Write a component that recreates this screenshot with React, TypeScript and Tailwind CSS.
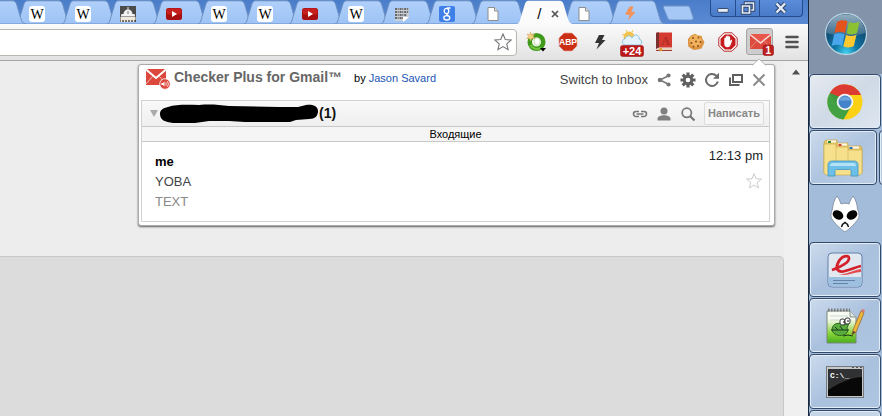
import type { ReactNode } from "react";
import clsx from "clsx";

type TabIcon = "none" | "wiki" | "dome" | "youtube" | "pixels" | "google" | "page" | "slash" | "bolt";

const tabs: { icon: TabIcon; title: string; active?: boolean }[] = [
  { icon: "wiki", title: "Wikipedia" },
  { icon: "wiki", title: "Wikipedia" },
  { icon: "dome", title: "Capitol" },
  { icon: "youtube", title: "YouTube" },
  { icon: "wiki", title: "Wikipedia" },
  { icon: "wiki", title: "Wikipedia" },
  { icon: "youtube", title: "YouTube" },
  { icon: "wiki", title: "Wikipedia" },
  { icon: "pixels", title: "Notes" },
  { icon: "google", title: "Google" },
  { icon: "page", title: "Page" },
  { icon: "slash", title: "Page", active: true },
  { icon: "page", title: "Page" },
  { icon: "bolt", title: "Page" },
];

function Favicon({ icon }: { icon: TabIcon }) {
  return (
    <svg viewBox="0 0 16 16" className="size-4 shrink-0" aria-hidden="true">
      {icon === "wiki" && (
        <>
          <rect width="16" height="16" rx="3" fill="#fff" />
          <text x="8" y="12.500" textAnchor="middle" fontFamily="Liberation Serif, serif" fontSize="14" fill="#000">
            W
          </text>
        </>
      )}
      {icon === "dome" && (
        <>
          <rect width="16" height="16" fill="#4b4b4b" />
          <path d="M7.500 1h1v2.500c2.500.5 3.800 2.200 4 4.500H3.500c.2-2.300 1.500-4 4-4.500z M1.500 8h13l.7 2.500H.8z" fill="#f3f3f3" />
          <path d="M8 5v3" stroke="#777" />
          <path d="M.5 11h15v3H.5z" fill="#efe8dc" />
          <path d="M1.500 14v2M4.500 14v2M7.500 14v2M10.500 14v2M13.500 14v2" stroke="#efe8dc" strokeWidth="1.500" />
        </>
      )}
      {icon === "youtube" && (
        <>
          <rect y="2" width="16" height="12" rx="2.500" fill="#a80f10" />
          <rect x="0.500" y="2.500" width="15" height="6" rx="2" fill="#c5201d" />
          <path d="M6 5l5 3-5 3z" fill="#fff" />
        </>
      )}
      {icon === "pixels" && (
        <>
          <path d="M1 2h14v9l-4 4H1z" fill="#c9ced4" />
          <path d="M1 3h14M1 6h14M1 9h12M1 12h9" stroke="#474747" strokeWidth="1.500" strokeDasharray="2 .7 1 .9" />
          <path d="M9 16v-5h6z" fill="#fff" />
        </>
      )}
      {icon === "google" && (
        <>
          <rect width="16" height="16" rx="2" fill="#3f7fe8" />
          <g fill="none" stroke="#fff" strokeWidth="1.300">
            <ellipse cx="7.500" cy="5" rx="2.300" ry="2.600" />
            <path d="M11.500 2H8M8.500 7.600c-2 .9.300 1.700 1.200 2.400" />
            <ellipse cx="7.800" cy="11.800" rx="3" ry="2.200" />
          </g>
        </>
      )}
      {icon === "page" && (
        <>
          <path d="M3 1.500h6.500L13 5v9.500H3z" fill="#fdfdfd" stroke="#8e8e8e" />
          <path d="M9.500 1.500V5H13" fill="#e6e6e6" stroke="#8e8e8e" />
        </>
      )}
      {icon === "bolt" && <path d="M7.500 0.500h4L9.500 5.500l4 .5L6 14.500 7.500 9 3 8.500z" fill="#f2935c" />}
    </svg>
  );
}

function BrowserTab({ icon, title, active }: { icon: TabIcon; title: string; active?: boolean }) {
  return (
    <button type="button" role="tab" aria-selected={!!active} aria-label={title} className={clsx("relative h-6 min-w-0 flex-1", active && "z-20")}>
      <svg viewBox="0 0 56 24" preserveAspectRatio="none" className="absolute -left-1 top-0 h-6 w-14" aria-hidden="true">
        <path
          d="M0 24c3-1 3-4 4.500-9l3-9.500C8.500 2 9.500.8 12 .8H42c3 0 4 1.200 5 4.700l3.500 12C52 22 53 23.500 56 24z"
          fill={active ? "#fbfbfb" : "url(#tabFill)"}
          stroke={active ? "none" : "#6d8fc2"}
        />
      </svg>
      {active ? (
        <span className="relative flex h-6 items-center justify-between pt-1 pr-2 pl-4 font-['Liberation_Sans',sans-serif] text-[15px] text-black">
          /
          <svg viewBox="0 0 8 8" className="size-2" aria-hidden="true">
            <path d="M1 1l6 6M7 1L1 7" stroke="#555" strokeWidth="1.700" />
          </svg>
        </span>
      ) : (
        <span className="relative flex pt-1 pl-[9px]">
          <Favicon icon={icon} />
        </span>
      )}
    </button>
  );
}

function TabStrip() {
  return (
    <div className="flex h-6 bg-linear-to-b from-[#4a7dc9] to-[#5b8ad2]">
      <svg className="absolute size-0" aria-hidden="true">
        <defs>
          <linearGradient id="tabFill" x2="0" y2="1">
            <stop offset="0" stopColor="#b0d0fa" />
            <stop offset="1" stopColor="#9dc3f5" />
          </linearGradient>
        </defs>
      </svg>
      <div className="relative h-6 w-5 shrink-0">
        <svg viewBox="0 0 27 24" className="absolute top-0 left-0 z-10 h-6 w-[27px]" aria-hidden="true">
          <path d="M-2 .8H12c3 0 4 1.200 5 4.700l3.500 12C22 22 23 23.500 26 24H-2z" fill="url(#tabFill)" stroke="#6d8fc2" />
        </svg>
      </div>
      <div role="tablist" className="flex w-[638px] flex-row">
        {tabs.map((tab, i) => (
          <BrowserTab key={i} {...tab} />
        ))}
      </div>
      <button type="button" aria-label="New tab" className="ml-1 h-6">
        <svg viewBox="0 0 32 24" className="h-6 w-8">
          <path d="M3 6h22c2 0 2.500.500 3 2l3 9c.5 2 0 3-2 3H9c-2 0-2.800-.6-3.500-2.500L1.500 8C1 6.500 1.500 6 3 6z" fill="#a5c8f6" stroke="#6d93c9" />
        </svg>
      </button>
      <div className="mr-[5px] ml-auto flex h-[17px] overflow-hidden rounded-b-sm border border-t-0 border-[#244b8c] bg-linear-to-b from-[#5b8cda] to-[#4a7bc8]">
        <button type="button" aria-label="Minimize" className="w-[25px] border-r border-[#244b8c]">
          <svg viewBox="0 0 25 16" className="h-4 w-6">
            <rect x="7" y="8.500" width="11" height="4" rx="1" fill="#e4edf8" stroke="#32456a" />
          </svg>
        </button>
        <button type="button" aria-label="Restore" className="w-6 border-r border-[#244b8c]">
          <svg viewBox="0 0 24 16" className="h-4 w-6" fill="none">
            <path d="M9.500 3h8v7h-8z" stroke="#32456a" strokeWidth="3.500" />
            <path d="M9.500 3h8v7h-8z" stroke="#e4edf8" strokeWidth="1.500" />
            <path d="M6.500 6h7v7h-7z" fill="#5685d2" stroke="#32456a" strokeWidth="3.500" />
            <path d="M6.500 6h7v7h-7z" stroke="#e4edf8" strokeWidth="1.700" />
          </svg>
        </button>
        <button type="button" aria-label="Close" className="flex w-[42px] justify-center">
          <svg viewBox="0 0 20 16" className="h-4 w-5">
            <path d="M5.500 3.500l8.500 9M14 3.500l-8.500 9" stroke="#32456a" strokeWidth="4.500" />
            <path d="M5.500 3.500l8.500 9M14 3.500l-8.500 9" stroke="#e4edf8" strokeWidth="2.400" />
          </svg>
        </button>
      </div>
    </div>
  );
}

function ExtensionButton({ label, children }: { label: string; children: ReactNode }) {
  return (
    <button type="button" aria-label={label} className="flex h-9 w-8 shrink-0 items-center justify-center">
      {children}
    </button>
  );
}

function Toolbar() {
  return (
    <div className="flex h-[37px] items-center border-b border-[#a5a5a5] bg-linear-to-b from-[#fbfbfb] to-[#e2e2e2]">
      <div className="mr-[3px] -ml-1 flex h-[27px] min-w-0 flex-1 items-center rounded-sm border border-[#b8b6ae] bg-white pr-1">
        <input aria-label="Address" className="min-w-0 flex-1 bg-transparent px-2 text-sm outline-none" />
        <button type="button" aria-label="Bookmark this page">
          <svg viewBox="0 0 18 18" className="size-[18px]">
            <path d="M9 1l2.300 5.500 5.900.5-4.500 3.900 1.400 5.800L9 13.600l-5.100 3.100 1.400-5.800L.8 7l5.900-.5z" fill="#fff" stroke="#777" strokeWidth="1.100" />
          </svg>
        </button>
      </div>

      <ExtensionButton label="Downloader">
        <svg viewBox="0 0 20 20" className="size-5">
          <circle cx="10.500" cy="10" r="6.800" fill="#f3f7ec" stroke="#3f9a1c" strokeWidth="4.500" />
          <path d="M4.500 13a7 7 0 0 0 10.500 2.500" stroke="#76c442" strokeWidth="2" fill="none" />
          <ellipse cx="11" cy="9.500" rx="3" ry="3.800" fill="#fff" stroke="#a9d68c" strokeWidth=".7" />
          <path d="M4.500 0l1 2.800L8.500 2 7 4.500l2 2-3-.2L4.500 9 3.600 6.300.5 6.500 2.700 4.500 1 2l2.800.7z" fill="#f1cf83" stroke="#d6a552" strokeWidth=".5" />
          <path d="M14 16h6l-3 3.500z" fill="#000" />
        </svg>
      </ExtensionButton>
      <ExtensionButton label="Adblock Plus">
        <svg viewBox="0 0 20 20" className="size-5">
          <path d="M6 1h8l5 5v8l-5 5H6l-5-5V6z" fill="#cb2f16" stroke="#e8a497" strokeWidth=".7" />
          <text x="10" y="13.200" textAnchor="middle" fontFamily="Liberation Sans, sans-serif" fontWeight="bold" fontSize="8.500" fill="#fff">
            ABP
          </text>
        </svg>
      </ExtensionButton>
      <ExtensionButton label="Bolt">
        <svg viewBox="0 0 16 16" className="size-4">
          <path d="M7 1h5.500L10 6h3.500L4.500 15.500 7 9H3z" fill="#333" />
        </svg>
      </ExtensionButton>
      <ExtensionButton label="Weather +24">
        <svg viewBox="0 0 24 30" className="h-[30px] w-6">
          <circle cx="9" cy="10" r="5.500" fill="#f5c34c" />
          <path d="M2 7l2 1M6 3l1 2M13 3l-1 2" stroke="#f5c34c" />
          <path d="M5 18c-4-1-3-6 0-6 1-4 6-4 7-1 2-5 8-3 7 1 3 0 4 6 0 6z" fill="#e4f2fb" stroke="#7bb8da" strokeWidth=".8" />
          <rect x="0.500" y="18.500" width="23" height="11" rx="2" fill="#bd1717" stroke="#8e0e0e" strokeWidth=".5" />
          <text x="12" y="27.500" textAnchor="middle" fontFamily="Liberation Sans, sans-serif" fontWeight="bold" fontSize="11" fill="#fff">
            +24
          </text>
        </svg>
      </ExtensionButton>
      <ExtensionButton label="Dictionary">
        <svg viewBox="0 0 18 20" className="h-5 w-[18px]">
          <path d="M1 2c0-1 .5-1.500 1.500-1.500H17v15H2.500L1 17z" fill="#d53a31" />
          <path d="M1 2c0-1 .5-1.500 1.500-1.500H4v15L1 17z" fill="#7a3130" />
          <path d="M1.500 18.500c0-2 .5-2.500 2-2.500H17v2.500z" fill="#e6d3bd" />
          <path d="M1 18.500h16" stroke="#a53a33" />
          <path d="M4.500 16H7v3.500l-1.300-1-1.200 1z" fill="#e1a32c" />
          <text x="10.500" y="12.500" textAnchor="middle" fontFamily="Liberation Serif, serif" fontWeight="bold" fontSize="12" fill="#b02a26">
            A
          </text>
        </svg>
      </ExtensionButton>
      <ExtensionButton label="Cookies">
        <svg viewBox="0 0 18 18" className="size-[18px]">
          <path d="M4 2.500L8 .8l3 1.700 3.500.2 1 3.300 2 3-1.500 3.500-1.500 3-4 1L7 17l-3-1.500-2.700-2L1 9.500 1 6z" fill="#dd9440" />
          <circle cx="8.500" cy="8" r="6" fill="#f0b25c" />
          <g fill="#8d4d1c">
            <circle cx="6" cy="5" r="1" />
            <circle cx="11.500" cy="4.500" r=".9" />
            <circle cx="9" cy="8.500" r="1" />
            <circle cx="4.500" cy="10" r="1" />
            <circle cx="13.500" cy="9" r="1" />
            <circle cx="11" cy="13" r="1" />
            <circle cx="6.500" cy="13.500" r=".9" />
          </g>
        </svg>
      </ExtensionButton>
      <ExtensionButton label="AdBlock">
        <svg viewBox="0 0 20 20" className="size-5">
          <path d="M6 .8h8L19.200 6v8L14 19.200H6L.8 14V6z" fill="#fff" stroke="#b8262a" />
          <path d="M6.800 2.500h6.400l4.300 4.300v6.400l-4.300 4.300H6.800l-4.300-4.300V6.800z" fill="#c61e20" />
          <path d="M6.300 9V6.500c0-1 1.300-1 1.300 0V5c0-1.200 1.500-1.200 1.500 0v-.6c0-1.100 1.500-1.100 1.500 0V5c0-1 1.500-1 1.500 0v4l.7-.9c.8-.8 1.700 0 1.200 1L12.500 13c-.6 1.500-1.500 2.200-3 2.200-2.200 0-3.200-1.300-3.200-3.400z" fill="#fff" />
        </svg>
      </ExtensionButton>
      <ExtensionButton label="Checker Plus for Gmail, 1 unread">
        <svg viewBox="0 0 28 28" className="size-7">
          <rect x="0.500" y="0.500" width="26" height="26" rx="2.500" fill="#cdcdcd" stroke="#a6a6a6" />
          <path d="M4 6h21v15H4z" fill="#dd4b3e" />
          <path d="M4 6h21l-10.500 9z" fill="#e9564a" />
          <path d="M4 6.500l10.500 8.500L25 6.500" fill="none" stroke="#f7dedb" strokeWidth="1.500" />
          <path d="M4 20.500l7-8M25 20.500l-7-8" fill="none" stroke="#eb8f86" strokeWidth=".8" />
          <rect x="17" y="17" width="10.500" height="10.500" rx="2" fill="#bd2020" stroke="#9a1515" strokeWidth=".6" />
          <text x="22.300" y="26" textAnchor="middle" fontFamily="Liberation Sans, sans-serif" fontWeight="bold" fontSize="10" fill="#fff">
            1
          </text>
        </svg>
      </ExtensionButton>
      <ExtensionButton label="Menu">
        <svg viewBox="0 0 14 14" className="size-3.5">
          <path d="M1.500 2h11M1.500 7h11M1.500 12h11" stroke="#525252" strokeWidth="2.600" strokeLinecap="round" />
        </svg>
      </ExtensionButton>
    </div>
  );
}

function PopupHeader() {
  return (
    <div className="flex h-[35px] items-start pr-2 pl-1.5 text-[#555]">
      <svg viewBox="0 0 26 22" className="mt-[3px] h-[22px] w-[26px] shrink-0" aria-hidden="true">
        <path d="M1 1h20v16H1z" fill="#dc483b" />
        <path d="M1 1.500l10 8.500 10-8.500" fill="none" stroke="#fff" strokeWidth="2" />
        <path d="M1 16l7-8M21 16l-7-8" fill="none" stroke="#f3b5af" />
        <circle cx="20" cy="16" r="5.300" fill="#dc483b" stroke="#fff" strokeWidth=".8" />
        <path d="M16.500 15h1.500l1.500-1.500v5L18 17h-1.500z" fill="#fff" />
        <path d="M20.800 14.200q1 1.800 0 3.600M22.500 13.200q1.800 2.800 0 5.600" stroke="#fff" fill="none" strokeWidth=".8" />
      </svg>
      <h1 className="ml-[3px] pt-[3px] text-[14px] leading-[18px] font-bold text-[#666]">Checker Plus for Gmail™</h1>
      <p className="ml-3 pt-[5px] text-[11px] leading-4 text-black">
        by{" "}
        <a href="#author" className="text-[#1b55b5]">
          Jason Savard
        </a>
      </p>
      <div className="ml-auto flex items-center gap-2 pt-[3px]">
        <a href="#inbox" className="text-[13px] leading-6 text-[#444]">
          Switch to Inbox
        </a>
        <button type="button" aria-label="Share">
          <svg viewBox="0 0 16 16" className="size-4">
            <path d="M13 3.500L4 8l9 4.500" stroke="#777" strokeWidth="1.500" fill="none" />
            <g fill="#777">
              <circle cx="12.500" cy="3.500" r="2.100" />
              <circle cx="4" cy="8" r="2.300" />
              <circle cx="12.500" cy="12.500" r="2.100" />
            </g>
          </svg>
        </button>
        <button type="button" aria-label="Options">
          <svg viewBox="0 0 16 16" className="size-4">
            <g stroke="#606060" strokeWidth="3.200">
              <path d="M8 .5v15M.5 8h15M2.700 2.700l10.600 10.600M13.300 2.700L2.700 13.300" />
            </g>
            <circle cx="8" cy="8" r="5.200" fill="#606060" />
            <circle cx="8" cy="8" r="2.300" fill="#fff" />
          </svg>
        </button>
        <button type="button" aria-label="Refresh">
          <svg viewBox="0 0 16 16" className="size-4">
            <path d="M13.800 9.500A6 6 0 1 1 12.300 3.800" fill="none" stroke="#6a6a6a" strokeWidth="2" />
            <path d="M15 .8v6H9z" fill="#6a6a6a" />
          </svg>
        </button>
        <button type="button" aria-label="Pop out">
          <svg viewBox="0 0 16 16" className="size-4" fill="none" stroke="#5f5f5f" strokeWidth="2">
            <path d="M5 3h9v7H5z" />
            <path d="M2 5.500V13h9.500" />
          </svg>
        </button>
        <button type="button" aria-label="Close popup">
          <svg viewBox="0 0 14 14" className="size-3.5">
            <path d="M1.500 1.500l11 11M12.500 1.500l-11 11" stroke="#8b8b8b" strokeWidth="2" />
          </svg>
        </button>
      </div>
    </div>
  );
}

function GmailPopup() {
  return (
    <section aria-label="Checker Plus for Gmail" className="absolute top-[3px] right-[33px] z-30 w-[637px] rounded-[3px] border border-[#aaa] bg-white pr-1 pb-[3px] pl-0.5 font-['Liberation_Sans',Arial,sans-serif] shadow-[0_1px_2px_rgba(0,0,0,0.6)]">
      <svg viewBox="0 0 14 8" className="absolute -top-[7px] right-2 h-2 w-3.5" aria-hidden="true">
        <path d="M0 8L7 1l7 7z" fill="#fff" />
        <path d="M0 7.500L7 1l7 6.500" fill="none" stroke="#bbb" />
      </svg>
      <div className="-mr-1 -ml-0.5">
        <PopupHeader />
      </div>
      <div className="border border-[#d2d2d2]">
        <div className="flex h-[26px] items-center border-b border-[#c9c9c9] bg-linear-to-b from-[#f9f9f9] to-[#efefef] pr-[5px] pl-[7px]">
          <svg viewBox="0 0 10 10" className="size-2.5" aria-hidden="true">
            <path d="M1 1h8L5 8z" fill="#aaa" />
          </svg>
          {/* scribbled-out account name */}
          <svg viewBox="0 0 160 20" className="h-5 w-40 shrink-0" aria-hidden="true">
            <path d="M9 3C18 0 30 1 40 1c12-1 20 0 30 1l50 1h19l8-2c8-1 12 2 12 6 0 5-3 8-9 8l-13 1-6 2H86l-16-1H50l-14 2H14C6 18 1 16 1 10c0-4 3-6 8-7z" fill="#000" />
          </svg>
          <span className="text-[14px] font-bold text-[#111]">(1)</span>
          <div className="ml-auto flex items-center gap-2">
            <button type="button" aria-label="Open link">
              <svg viewBox="0 0 16 16" className="size-4" fill="none" stroke="#777" strokeWidth="1.600">
                <path d="M7 5.500H4a2.500 2.500 0 0 0 0 5h3M9 5.500h3a2.500 2.500 0 0 1 0 5H9M4.500 8h7" />
              </svg>
            </button>
            <button type="button" aria-label="Contacts">
              <svg viewBox="0 0 16 16" className="size-4" fill="#808080">
                <circle cx="8" cy="5" r="3.500" />
                <path d="M1.500 14.500v-1.500c0-2.500 3-3.700 6.500-3.700s6.500 1.200 6.500 3.700v1.500z" />
              </svg>
            </button>
            <button type="button" aria-label="Search">
              <svg viewBox="0 0 16 16" className="size-4" fill="none" stroke="#777">
                <circle cx="6.800" cy="6.800" r="4.600" strokeWidth="1.700" />
                <path d="M10 10l4.500 4.500" strokeWidth="2.200" />
              </svg>
            </button>
            <button type="button" className="h-[23px] w-[60px] rounded-xs border border-[#dcdcdc] bg-[#f6f6f6] text-[11px] font-bold text-[#888]">
              Написать
            </button>
          </div>
        </div>
        <h2 className="h-[15px] border-b border-[#c9c9c9] bg-[#f5f5f5] text-center text-[11px] leading-[14px] text-black">Входящие</h2>
        <article className="flex h-[79px] justify-between pr-1.5 pl-[13px]">
          <div className="pt-[10px] text-[13px] leading-5">
            <p className="font-bold text-black">me</p>
            <p className="text-[#444]">YOBA</p>
            <p className="text-[#888]">TEXT</p>
          </div>
          <div className="flex flex-col items-end pt-1">
            <time className="text-[13px] leading-5 text-[#222]">12:13 pm</time>
            <button type="button" aria-label="Star message" className="mt-1.5">
              <svg viewBox="0 0 18 18" className="size-[18px]">
                <path d="M9 1.500l2 5.300 5.500.2-4.300 3.500 1.500 5.500L9 13l-4.700 3 1.500-5.500L1.500 7 7 6.800z" fill="#fff" stroke="#ccc" />
              </svg>
            </button>
          </div>
        </article>
      </div>
    </section>
  );
}

function StartOrb() {
  return (
    <svg viewBox="0 0 44 44" className="size-11" aria-hidden="true">
      <defs>
        <radialGradient id="orb" cx="0.5" cy="0.95" r="0.8">
          <stop offset="0" stopColor="#3fd0ee" />
          <stop offset="0.350" stopColor="#1178a6" />
          <stop offset="1" stopColor="#0f3a60" />
        </radialGradient>
        <linearGradient id="orbShine" x2="0" y2="1">
          <stop offset="0" stopColor="#b3cad8" />
          <stop offset="1" stopColor="#42718f" />
        </linearGradient>
      </defs>
      <circle cx="22" cy="22" r="20.500" fill="url(#orb)" stroke="#b7d2e2" strokeWidth="1.300" />
      <path d="M2.500 21C4 8 12 2.500 22 2.500S40 8 41.500 21c-12 4-27 4-39 0z" fill="url(#orbShine)" opacity=".8" />
      <path d="M13 10c3-2 6.500-2.500 10.500-.7L21 21c-3-1.800-6.500-1.800-10.500 0z" fill="#e4531c" />
      <path d="M25 10c3 1.500 7 1.500 10.500-.3L33 21c-3 1.800-7 2-10.500.3z" fill="#8cc232" />
      <path d="M10 22.500c3.500-1.800 7-1.500 10.600 0L18 34c-3-1.800-6.500-1.800-10.300 0z" fill="#4aa6ec" />
      <path d="M22 23c3 1.500 7 1.500 10.500-.3L29.800 34c-3 1.800-7 2-10.500.3z" fill="#fdc92f" />
    </svg>
  );
}

function ChromeIcon() {
  return (
    <svg viewBox="0 0 36 36" className="size-9" aria-hidden="true">
      <circle cx="18" cy="18" r="17.500" fill="#fbd116" />
      <path d="M18 18L2.500 9.500A17.500 17.500 0 0 0 16.500 35.500l7.500-13z" fill="#42a243" />
      <path d="M2.800 9A17.500 17.500 0 0 1 34 11H18l-7.500 9z" fill="#db3b30" />
      <path d="M3 9l7 12 3-8z" fill="#3b9a3f" />
      <circle cx="18" cy="18" r="8.300" fill="#f4f4f4" />
      <circle cx="18" cy="18" r="6.500" fill="#4383c9" />
      <path d="M12 16.500a6.500 6.500 0 0 1 12 0z" fill="#6ea4dc" />
    </svg>
  );
}

function ExplorerIcon() {
  return (
    <svg viewBox="0 0 40 40" className="size-10" aria-hidden="true">
      <path d="M1 4l2-2h11v3h11v3h13l1 2v25H1z" fill="#e3c566" stroke="#c6a448" strokeWidth=".7" />
      <path d="M4 3.500h9M15 6.500h9M26 9.500h10" stroke="#fdfbf0" strokeWidth="2" />
      <path d="M5 4h3" stroke="#2f8a37" strokeWidth="2" />
      <path d="M15.500 7h3" stroke="#cc4434" strokeWidth="2" />
      <path d="M26.500 10h3" stroke="#2f6fb7" strokeWidth="2" />
      <path d="M1 6h12v3h12v3h14v23l-2 2H3l-2-2z" fill="#f6e08c" stroke="#cfae4c" strokeWidth=".7" />
      <path d="M13 9v16M25 12v13" stroke="#e0c468" />
      <path d="M5 38V27c0-2.500 1.500-4 4-4h22c2.500 0 4 1.500 4 4v11h-7v-5c0-1-.5-1.500-1.500-1.500h-13c-1 0-1.500.5-1.500 1.500v5z" fill="#6bbfe8" stroke="#4795bd" strokeWidth=".8" />
      <path d="M7 28c0-2 1-3 3-3h20c2 0 3 1 3 3z" fill="#b4e2f5" />
    </svg>
  );
}

function FoobarIcon() {
  return (
    <svg viewBox="0 0 32 38" className="h-[38px] w-8" aria-hidden="true">
      <path d="M8 1c2 3 3 5 4 8 3-1 5-1 8 0 1-3 2-5 4-8 3 4 4 8 4.500 13 2 5 2 8 0 11-3 4-8 9-12.500 12C11.500 34 6.500 29 3.500 25c-2-3-2-6 0-11C4 9 5 5 8 1z" fill="#fff" stroke="#788899" strokeWidth=".8" />
      <ellipse cx="9" cy="20" rx="5.700" ry="4.300" transform="rotate(30 9 20)" fill="#050505" />
      <ellipse cx="23" cy="20" rx="5.700" ry="4.300" transform="rotate(-30 23 20)" fill="#050505" />
      <path d="M12.500 32l1-2.500 2.500-2 2.500 2 1 2.500" fill="none" stroke="#111" strokeWidth="1.500" />
    </svg>
  );
}

function ReaderIcon() {
  return (
    <svg viewBox="0 0 36 36" className="size-9" aria-hidden="true">
      <rect x="1" y="1" width="34" height="34" rx="4" fill="#e2e8f0" stroke="#6281aa" />
      <path d="M1.500 25h33v6c0 2.500-1.500 3.500-3.500 3.500H5c-2 0-3.500-1-3.500-3.500z" fill="#9dbfe0" />
      <path d="M6 28.500h22M6 31.500h15" stroke="#6382a8" />
      <path d="M5 18C13 15 22 11 22 6.500 22 2 14 4 11 11c-3 6 0 10 7 8 6-1.500 11-4 16-5" fill="none" stroke="#d32029" strokeWidth="2.800" />
      <path d="M12 22c7 1 14-4 22-5v3c-8 0-14 5-22 2z" fill="#e34f50" />
    </svg>
  );
}

function NotepadIcon() {
  return (
    <svg viewBox="0 0 40 38" className="h-[38px] w-10" aria-hidden="true">
      <defs>
        <linearGradient id="sheet" x2="0" y2="1">
          <stop offset="0.250" stopColor="#f8fbf2" />
          <stop offset="0.700" stopColor="#88d437" />
          <stop offset="1" stopColor="#48ae1d" />
        </linearGradient>
      </defs>
      <path d="M2 4h23l6 6v26H2z" fill="url(#sheet)" stroke="#7b877d" />
      <path d="M25 4v6h6" fill="#dce1df" stroke="#88938b" />
      <path d="M3 3h22" stroke="#777" strokeWidth="3" strokeDasharray="1.500 1.500" />
      <path d="M5 9h18M5 13h22" stroke="#cbd8ce" />
      <path d="M7 22c1-6 7-7 12-4l5-2-2 5c3 5-4 9-10 7-3-1-5-3-5-6z" fill="#58ad3c" stroke="#1e4e1b" strokeWidth=".8" />
      <path d="M6 23h18M10 20l3 3M15 19l3 4M18 29l5-1 5 1" fill="none" stroke="#18391a" />
      <rect x="15" y="12" width="5" height="6" rx="2" fill="#fff" stroke="#333" />
      <rect x="20" y="11" width="5" height="6" rx="2" fill="#fff" stroke="#333" />
      <path d="M19 14v2M23 13v2" stroke="#111" />
      <path d="M27 28l1-5L36 4l3 2-8 19z" fill="#f0b83b" stroke="#9a6a2a" strokeWidth=".8" />
      <path d="M36 4l1-2 3 1-1 3z" fill="#d77b76" />
      <path d="M27 28l1-4 2.500 1z" fill="#514033" />
    </svg>
  );
}

function ConsoleIcon() {
  return (
    <svg viewBox="0 0 38 32" className="h-8 w-[38px]" aria-hidden="true">
      <rect x="0.500" y="0.500" width="37" height="31" fill="#c6c8ca" stroke="#73797f" />
      <path d="M2 3h34v27H2z" fill="#080808" />
      <path d="M2 3h34v8C22 12 12 18 2 24z" fill="#2f3133" />
      <path d="M26 1.500h2M30 1.500h2M34 1.500h2" stroke="#555" />
      <text x="4" y="12" fontFamily="Liberation Mono, monospace" fontWeight="bold" fontSize="8" fill="#fff">
        C:\_
      </text>
    </svg>
  );
}

function TaskButton({ label, className, children }: { label: string; className?: string; children?: ReactNode }) {
  return (
    <button
      type="button"
      aria-label={label}
      className={clsx("flex h-[53px] shrink-0 items-center justify-center rounded-[3px] border border-[#e3edf7] outline outline-[#344a68]", className)}
    >
      {children}
    </button>
  );
}

function Taskbar() {
  return (
    <aside aria-label="Taskbar" className="flex w-[74px] shrink-0 flex-col overflow-hidden border-l border-[#17273f] bg-[#a3bcda]">
      <button type="button" aria-label="Start" className="flex h-[74px] shrink-0 items-center justify-center bg-[#8293aa] pb-1.5">
        <StartOrb />
      </button>
      <div className="flex flex-col gap-[3px] pt-px pr-0.5 pl-px">
        <TaskButton label="Chrome" className="bg-linear-to-br from-[#e6eaf0] via-[#cfdae6] to-[#dde6f0]">
          <ChromeIcon />
        </TaskButton>
        <div className="flex gap-1">
          <TaskButton label="Explorer" className="flex-1 bg-linear-to-br from-[#cbdaec] via-[#aec4df] to-[#b9cde5]">
            <ExplorerIcon />
          </TaskButton>
          <span className="-mr-1 w-1 rounded-l-[3px] border-l border-[#e3edf7] bg-[#b3c8e1] outline outline-[#344a68]" />
        </div>
        <button type="button" aria-label="foobar2000" className="flex h-[53px] items-center justify-center">
          <FoobarIcon />
        </button>
        <TaskButton label="Reader" className="bg-linear-to-br from-[#cbdaec] via-[#aac1de] to-[#afc6e2]">
          <ReaderIcon />
        </TaskButton>
        <TaskButton label="Notepad++" className="bg-linear-to-br from-[#cbdaec] via-[#aac1de] to-[#afc6e2]">
          <NotepadIcon />
        </TaskButton>
        <TaskButton label="Command prompt" className="bg-linear-to-br from-[#cbdaec] via-[#aac1de] to-[#afc6e2]">
          <ConsoleIcon />
        </TaskButton>
        <TaskButton label="Window" className="bg-[#c5d6e9]" />
      </div>
    </aside>
  );
}

export default function App() {
  return (
    <div className="flex h-screen overflow-hidden bg-[#ededed]">
      <div className="flex min-w-0 flex-1 flex-col">
        <TabStrip />
        <Toolbar />
        <main className="relative flex min-h-0 flex-1">
          <div className="mt-[195px] flex-1 rounded-tr-[5px] border-t border-r border-[#c8c8c8] bg-[#dcdcdc]" />
          <div className="flex w-6 justify-center bg-[#f0f0f0] pt-2">
            <svg viewBox="0 0 8 6" className="h-1.5 w-2" aria-hidden="true">
              <path d="M4 .5L8 5.500H0z" fill="#505050" />
            </svg>
          </div>
          <GmailPopup />
        </main>
      </div>
      <Taskbar />
    </div>
  );
}
